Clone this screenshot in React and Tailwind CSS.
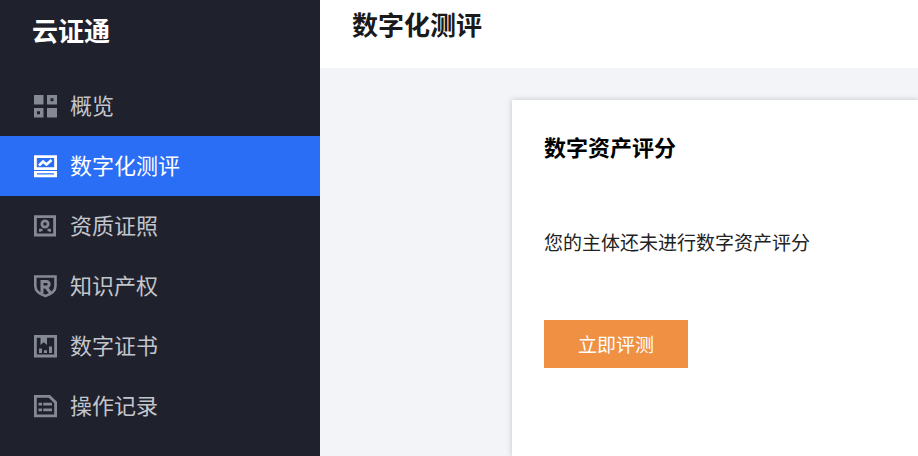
import React, { useState } from 'react';

const OverviewIcon = () => (
  <svg className="h-[26px] w-[26px] shrink-0" viewBox="0 0 26 26" fill="currentColor" aria-hidden="true">
    <path d="M2 2h9.500v9.500H2z" />
    <path fillRule="evenodd" d="M15 2h10v9.500H15zM18.500 5.200v3h3v-3z" />
    <path fillRule="evenodd" d="M2 15h9.500v9.500H2zM5 18.200v3h3v-3z" />
    <path d="M15 15h10v9.500H15z" />
  </svg>
);

const AssessIcon = () => (
  <svg className="h-[26px] w-[26px] shrink-0" viewBox="0 0 26 26" fill="none" stroke="currentColor" aria-hidden="true">
    <path strokeWidth="2.8" d="M3.400 3.600h20.200v12H3.400z" />
    <path strokeWidth="2.6" d="M7 12.500l4-4 3.500 3 5-4.500" />
    <path fill="currentColor" stroke="none" fillRule="evenodd" d="M2 18h23v6.200H2zM5 20.200v1.300h17v-1.300z" />
  </svg>
);

const LicenseIcon = () => (
  <svg className="h-[26px] w-[26px] shrink-0" viewBox="0 0 26 26" fill="none" stroke="currentColor" aria-hidden="true">
    <path strokeWidth="2.8" d="M3.400 3.600h19.200v18.400H3.400z" />
    <circle cx="13" cy="11" r="3.100" strokeWidth="2.8" />
    <path strokeWidth="2.4" d="M7 17h3.500M15.500 17H19" />
    <path strokeWidth="1.800" d="M8 16.200v2.500M18 16.200v2.500" />
  </svg>
);

const PropertyIcon = () => (
  <svg className="h-[26px] w-[26px] shrink-0" viewBox="0 0 26 26" fill="none" stroke="currentColor" aria-hidden="true">
    <path strokeWidth="2.6" d="M3.300 3.500h20.200v9.500c0 5-4 8-10.100 10C7.300 21 3.300 18 3.300 13z" />
    <path strokeWidth="3" d="M10 20.500V8.600h4.500a2.700 2.700 0 0 1 0 5.400H11M14 14l4.500 6" />
  </svg>
);

const CertificateIcon = () => (
  <svg className="h-[26px] w-[26px] shrink-0" viewBox="0 0 26 26" fill="none" stroke="currentColor" aria-hidden="true">
    <path strokeWidth="2.8" d="M3.400 3.400h20.200v19.600H3.400z" />
    <path fill="currentColor" stroke="none" d="M8.500 3h6.500v9l-3.200-2.800L8.500 12z" />
    <path strokeWidth="3" d="M8.500 20v-4.500M13.500 20v-2.800M18.500 20v-6.500" />
  </svg>
);

const RecordIcon = () => (
  <svg className="h-[26px] w-[26px] shrink-0" viewBox="0 0 26 26" fill="none" stroke="currentColor" aria-hidden="true">
    <path strokeWidth="2.8" d="M3.400 3.400h14l6.200 6v13.400H3.400z" />
    <path strokeWidth="2.8" d="M6.500 11.200H10M11.200 11.200H20M6.500 16.800H10M11.200 16.800H20" />
  </svg>
);

const menuItems = [
  { key: 'overview', label: '概览', icon: OverviewIcon },
  { key: 'assess', label: '数字化测评', icon: AssessIcon },
  { key: 'license', label: '资质证照', icon: LicenseIcon },
  { key: 'property', label: '知识产权', icon: PropertyIcon },
  { key: 'certificate', label: '数字证书', icon: CertificateIcon },
  { key: 'record', label: '操作记录', icon: RecordIcon },
];

const App = () => {
  const [active, setActive] = useState('assess');

  const handleSelect = (e, key) => {
    e.preventDefault();
    setActive(key);
  };

  return (
    <div className="flex min-h-screen overflow-hidden bg-[#f2f4f8] font-['Noto_Sans_CJK_SC',sans-serif]">
      {/* Sidebar */}
      <aside className="w-80 shrink-0 bg-[#1f212d]">
        <div className="px-8 pt-2.5 pb-6.5 text-[26px] leading-10 font-bold text-white">云证通</div>
        <nav>
          {menuItems.map(({ key, label, icon: Icon }) => (
            <a
              key={key}
              href={`#${key}`}
              onClick={(e) => handleSelect(e, key)}
              className={`flex h-15 items-center gap-3 px-8 text-[22px] ${
                active === key ? 'bg-[#2b6ef6] text-white' : 'text-[#858993]'
              }`}
            >
              <Icon />
              <span className={`pb-1 ${active === key ? 'text-white' : 'text-[#c3c5cc]'}`}>{label}</span>
            </a>
          ))}
        </nav>
      </aside>

      <div className="flex min-w-0 flex-1 flex-col">
        {/* Page header */}
        <header className="bg-white px-8 pt-1 pb-6">
          <h1 className="text-[26px] leading-10 font-bold text-[#1a1a1a]">数字化测评</h1>
        </header>

        <main className="flex flex-1 pt-8 pl-48">
          <section className="flex-1 bg-white px-8 pt-6.5 shadow-[0_0_6px_rgba(0,0,0,0.2)]">
            <h2 className="text-[22px] leading-10 font-bold text-black">数字资产评分</h2>
            <p className="pt-14 text-[19px] leading-10 text-[#222222]">您的主体还未进行数字资产评分</p>
            <button type="button" className="mt-14.5 h-12 w-36 cursor-pointer bg-[#f09042] text-[19px] text-white">
              立即评测
            </button>
          </section>
        </main>
      </div>
    </div>
  );
};

export default App;
